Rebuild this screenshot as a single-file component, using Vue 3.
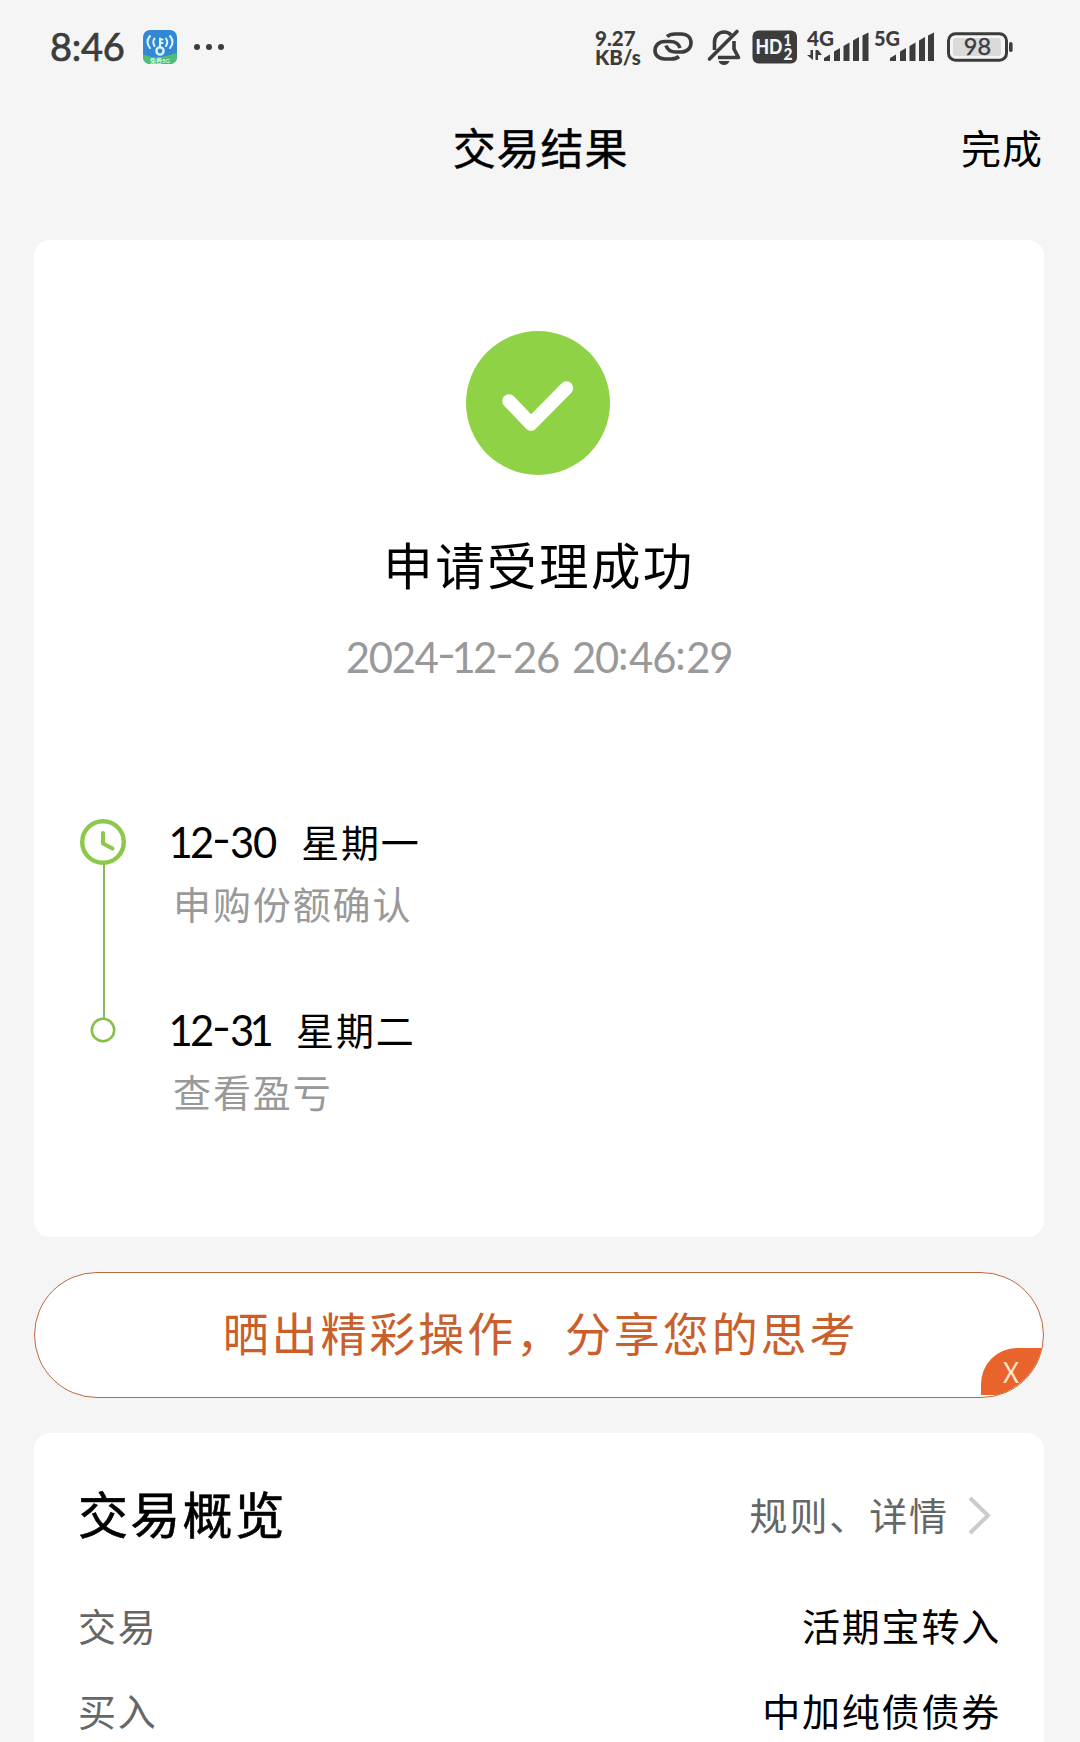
<script setup>
import { ref } from 'vue';

const steps = ref([
  { date: '12-30', day: '星期一', text: '申购份额确认' },
  { date: '12-31', day: '星期二', text: '查看盈亏' },
]);

const rows = ref([
  { label: '交易', value: '活期宝转入' },
  { label: '买入', value: '中加纯债债券' },
]);

const showShare = ref(true);

const chars = function (value) {
  return value.split('');
};

// narrow characters get their own width, the digits keep the font's
const charClass = function (c) {
  return { one: c === '1', colon: c === ':', dash: c === '-', space: c === ' ' };
};
</script>

<template>
  <div class="page">
    <div class="status">
      <span class="time">8:46</span>
      <svg class="app-icon" width="36" height="36" viewBox="0 0 36 36">
        <defs>
          <clipPath id="appClip"><rect x="1" y="1" width="34" height="34" rx="7" /></clipPath>
        </defs>
        <g clip-path="url(#appClip)">
          <rect width="36" height="36" fill="#3288d4" />
          <path d="M0 25Q10 29 19 28T36 23V36H0Z" fill="#4fbd78" />
          <g fill="none" stroke="#d8f6fb" stroke-width="2" stroke-linecap="round">
            <circle cx="18" cy="22" r="3.600" stroke-width="2.400" />
            <path d="M18 18V9.500M18 10.500H20.500M18 14H20.500M12.500 9.500Q10 13 12.500 17M8 7Q3 13 8 19M24 9.500Q26.500 13 24 17M28 7Q33 13 28 19" />
          </g>
          <text x="18" y="33.500" text-anchor="middle" font-size="6" font-weight="700" fill="#d9f7dc">免费5G</text>
        </g>
      </svg>
      <svg class="dots" width="32" height="8" viewBox="0 0 32 8" fill="#3c3c3c">
        <circle cx="4" cy="4" r="3" />
        <circle cx="16" cy="4" r="3" />
        <circle cx="28" cy="4" r="3" />
      </svg>

      <div class="speed">
        <span>9.27</span>
        <span>KB/s</span>
      </div>
      <svg class="link" width="42" height="34" viewBox="0 0 42 34" fill="none" stroke="#3c3c3c" stroke-width="3.600">
        <path d="M15 6.500Q18 4 23 4H29C35.500 4 39 8 39 13C39 18 35 22 29.500 22H24Q16 22 14 15.500" />
        <path d="M27 26.500Q24 29 19 29H13C6.500 29 3 25 3 20.500C3 15.500 7 11.500 12.500 11.500H18Q26 11.500 28 18" />
      </svg>
      <svg class="bell" width="36" height="38" viewBox="0 0 36 38" fill="none" stroke="#3c3c3c" stroke-width="3.600" stroke-linejoin="round">
        <path d="M8.500 22V14.500C8.500 8.500 12.500 4 18 4Q22.500 4 25 7" />
        <path d="M28 13V21L32.500 29.500H12" />
        <path d="M3.500 31L31 3.500" stroke-linecap="round" />
        <path d="M12.500 33H23.500Q22 37 18 37T12.500 33Z" fill="#3c3c3c" stroke="none" />
      </svg>
      <svg class="hd" width="46" height="34" viewBox="0 0 46 34">
        <rect x="0.500" y="0.500" width="44.500" height="33" rx="6" fill="#3c3c3c" />
        <g fill="#f5f5f5" font-weight="900">
          <text x="3.500" y="24" font-size="20" textLength="27" lengthAdjust="spacingAndGlyphs">HD</text>
          <text x="31.500" y="16" font-size="16" textLength="8" lengthAdjust="spacingAndGlyphs">1</text>
          <text x="31.500" y="29.500" font-size="16" textLength="9" lengthAdjust="spacingAndGlyphs">2</text>
        </g>
      </svg>
      <svg class="signal" width="64" height="34" viewBox="0 0 64 34" fill="#3c3c3c">
        <text x="0" y="15.500" font-size="20" font-weight="900" textLength="27" lengthAdjust="spacingAndGlyphs">4G</text>
        <path d="M3.500 20H6V30L0 25H3.500ZM8.500 20H11V30H8.500ZM11 20L15 25H11Z" />
        <path d="M17 31V28L23 24.500V31ZM27 31V21.500L33 18V31ZM36.500 31V16L42.500 12.500V31ZM46 31V10.500L52 7V31ZM55.500 31V5.500L61.500 2.500V31Z" />
      </svg>
      <svg class="signal second" width="62" height="34" viewBox="0 0 62 34" fill="#3c3c3c">
        <text x="0" y="15.500" font-size="20" font-weight="900" textLength="26" lengthAdjust="spacingAndGlyphs">5G</text>
        <path d="M16 31V28L22 24.500V31ZM26 31V21.500L32 18V31ZM35.500 31V16L41.500 12.500V31ZM45 31V10.500L51 7V31ZM54 31V5.500L60 2.500V31Z" />
      </svg>
      <svg class="battery" width="66" height="30" viewBox="0 0 66 30">
        <rect x="1.500" y="1.700" width="58" height="26.500" rx="7" fill="none" stroke="#3c3c3c" stroke-width="3" />
        <rect x="6" y="6" width="48" height="18" rx="3" fill="#dadada" />
        <rect x="62" y="10" width="3.600" height="10" rx="1.800" fill="#3c3c3c" />
        <text x="30.500" y="23" text-anchor="middle" font-size="23.500" fill="#3c3c3c" stroke="#3c3c3c" stroke-width="0.400">98</text>
      </svg>
    </div>

    <header class="header">
      <h1>交易结果</h1>
      <a class="done">完成</a>
    </header>

    <section class="card result">
      <svg class="success" width="144" height="144" viewBox="0 0 144 144">
        <circle cx="72" cy="72" r="72" fill="#8fd246" />
        <path d="M43 70L65 93L100.500 57" fill="none" stroke="#fff" stroke-width="13.500" stroke-linecap="round" stroke-linejoin="round" />
      </svg>
      <h2>申请受理成功</h2>
      <p class="datetime"><span v-for="(c, i) in chars('2024-12-26 20:46:29')" :key="i" :class="charClass(c)">{{ c }}</span></p>

      <ul class="steps">
        <li v-for="(step, index) in steps" :key="step.date">
          <div class="mark">
            <svg v-if="index === 0" width="48" height="48" viewBox="0 0 48 48" fill="none" stroke="#8cc94a">
              <circle cx="24" cy="24" r="20.800" stroke-width="4.400" />
              <path d="M24 15V25.500L33.500 30.500" stroke-width="4" stroke-linecap="round" stroke-linejoin="round" />
            </svg>
            <svg v-else class="small" width="26" height="26" viewBox="0 0 26 26">
              <circle cx="13" cy="13" r="11.200" fill="#fff" stroke="#86bf4c" stroke-width="2.600" />
            </svg>
            <i v-if="index === 0" class="line"></i>
          </div>
          <div class="info">
            <p class="when">
              <span class="date"><span v-for="(c, i) in chars(step.date)" :key="i" :class="charClass(c)">{{ c }}</span></span>
              <span class="day">{{ step.day }}</span>
            </p>
            <p class="text">{{ step.text }}</p>
          </div>
        </li>
      </ul>
    </section>

    <section v-if="showShare" class="share">
      <span>晒出精彩操作，分享您的思考</span>
      <button class="close" @click="showShare = false"><span>X</span></button>
    </section>

    <section class="card overview">
      <div class="overview-head">
        <h3>交易概览</h3>
        <a class="rules">
          <span>规则、详情</span>
          <svg width="24" height="40" viewBox="0 0 24 40" fill="none" stroke="#cbcbcb" stroke-width="4">
            <path d="M2 3L20 20.500L2 38" />
          </svg>
        </a>
      </div>
      <div v-for="row in rows" :key="row.label" class="row">
        <span class="label">{{ row.label }}</span>
        <span>{{ row.value }}</span>
      </div>
    </section>
  </div>
</template>

<style>
body {
  background: #f5f5f5;
  overflow: hidden;
}
</style>

<style scoped>
.page {
  width: 1080px;
  height: 1742px;
  overflow: hidden;
  background: #f5f5f5;
  color: #000;
  font-family: Lato, 'Noto Sans CJK SC', sans-serif;
}
h1,
h2,
h3,
p,
ul {
  margin: 0;
  padding: 0;
  font-weight: 400;
}
.status {
  display: flex;
  align-items: flex-start;
  height: 95px;
  padding-left: 50px;
  color: #3c3c3c;
}
.time {
  width: 92px;
  margin-top: 24px;
  font-size: 38px;
  line-height: 44px;
  letter-spacing: -0.3px;
  -webkit-text-stroke: 0.7px #3c3c3c;
}
.app-icon {
  margin-top: 29px;
}
.dots {
  margin: 43px 0 0 15px;
}
.speed {
  display: flex;
  flex-direction: column;
  width: 56px;
  margin: 29px 0 0 370px;
  font-size: 20.5px;
  font-weight: 900;
  line-height: 19px;
}
.link {
  width: 42px;
  margin: 30px -1px 0 1px;
}
.bell {
  margin: 28px 0 0 13px;
}
.hd {
  margin: 30px 0 0 10px;
}
.signal {
  margin: 30px 0 0 9px;
  overflow: visible;
}
.second {
  margin-left: 3px;
}
.battery {
  margin: 32px 0 0 11px;
}
.header {
  display: grid;
  grid-template-columns: 1fr auto 1fr;
  align-items: center;
  height: 106px;
  margin-bottom: 39px;
  padding: 1px 37px 0 38px;
  box-sizing: border-box;
}
.header h1 {
  grid-column: 2;
  font-size: 43px;
  line-height: 60px;
  letter-spacing: 0.9px;
  -webkit-text-stroke: 0.5px #000;
}
.done {
  justify-self: end;
  font-size: 40px;
  line-height: 60px;
  letter-spacing: 1px;
}
.card {
  width: 1010px;
  margin-left: 34px;
  border-radius: 16px;
  background: #fff;
}
.result {
  display: flex;
  flex-direction: column;
  align-items: center;
  height: 906px;
  padding-top: 91px;
}
.success {
  margin-right: 2px;
}
.result h2 {
  margin-top: 61px;
  font-size: 49.5px;
  line-height: 60px;
  letter-spacing: 2.4px;
}
.datetime {
  margin-top: 31px;
  color: #999;
  font-size: 41.8px;
  line-height: 60px;
  letter-spacing: -1.2px;
  white-space: nowrap;
}
.one,
.colon,
.dash,
.space {
  display: inline-block;
  letter-spacing: 0;
}
.one {
  width: 18px;
  text-indent: -3.5px;
}
.colon {
  width: 11px;
  transform: translateY(-3px);
}
.dash {
  width: 17px;
  text-align: center;
  transform: translateY(-4px) scaleX(1.25);
}
.space {
  width: 13px;
}
.steps {
  align-self: stretch;
  list-style: none;
  margin-top: 131px;
}
.steps li {
  display: flex;
  height: 188px;
}
.mark {
  display: flex;
  flex-direction: column;
  align-items: center;
  width: 48px;
  margin: 0 45px;
}
.mark svg {
  flex: none;
}
.mark .small {
  position: relative;
  margin-top: 11px;
}
.line {
  flex: none;
  width: 2px;
  height: 155px;
  margin: -2px 0 0 1px;
  background: #89b862;
}
.info {
  margin-top: -1px;
}
.when {
  display: flex;
  font-size: 38px;
  line-height: 50px;
  white-space: nowrap;
}
.date {
  font-size: 41.8px;
  letter-spacing: -1.2px;
}
.day {
  margin-left: 25px;
  letter-spacing: 1.8px;
}
.text {
  margin: 12px 0 0 1px;
  color: #999;
  font-size: 38px;
  line-height: 50px;
  letter-spacing: 1.9px;
}
.share {
  position: relative;
  display: flex;
  align-items: center;
  justify-content: center;
  box-sizing: border-box;
  width: 1010px;
  height: 126px;
  margin: 35px 0 35px 34px;
  padding: 0 0 8px 3px;
  overflow: hidden;
  border: 1.5px solid #bf683f;
  border-radius: 63px;
  background: #fff;
  color: #c9602c;
  font-size: 46px;
  letter-spacing: 2.9px;
}
.close {
  position: absolute;
  right: 0;
  bottom: 2px;
  width: 62px;
  height: 47px;
  padding: 0 2px 0 0;
  border: 0;
  border-radius: 36px 0 0 0;
  background: #e8642c;
  color: #fbe3cc;
  font-family: Lato, sans-serif;
  font-size: 28px;
  cursor: pointer;
}
.close span {
  display: inline-block;
  transform: scaleX(0.88);
}
.overview {
  height: 400px;
  padding-top: 52px;
}
.overview-head {
  display: flex;
  justify-content: space-between;
  align-items: center;
  height: 60px;
  margin-bottom: 39px;
  padding: 0 52px 0 44px;
}
.overview-head h3 {
  font-size: 50px;
  line-height: 60px;
  letter-spacing: 2.2px;
  -webkit-text-stroke: 0.6px #000;
}
.rules {
  display: flex;
  align-items: center;
  color: #666;
  font-size: 38px;
  letter-spacing: 1.9px;
}
.rules span {
  margin-top: -4px;
}
.rules svg {
  margin-left: 19px;
}
.row {
  display: flex;
  justify-content: space-between;
  height: 85px;
  padding: 0 43px 0 44px;
  font-size: 38px;
  line-height: 85px;
  letter-spacing: 1.8px;
}
.label {
  color: #666;
}
</style>
